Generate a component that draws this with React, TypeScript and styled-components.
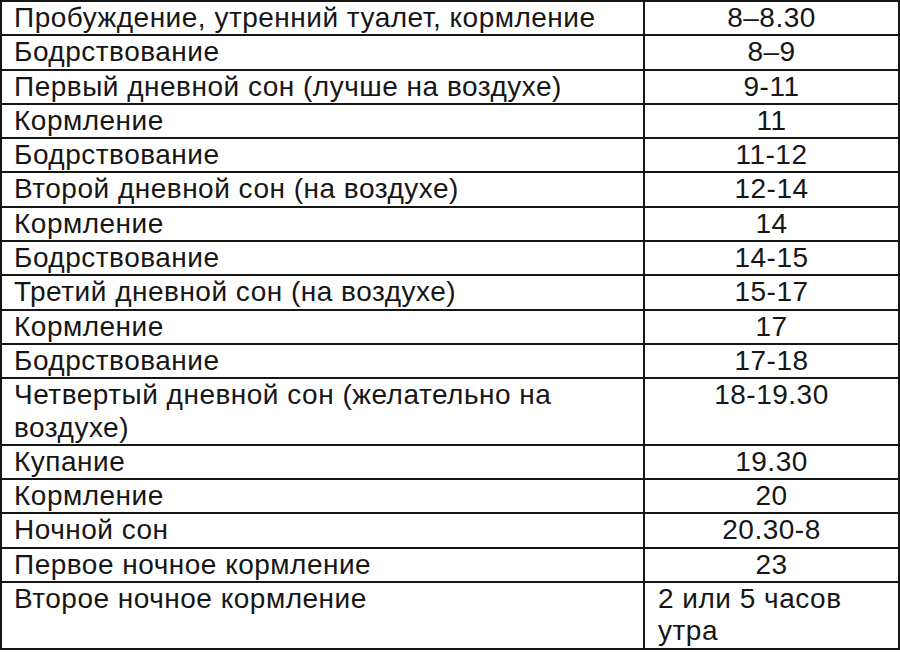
import styled, { createGlobalStyle } from "styled-components";

const GlobalStyle = createGlobalStyle`
  html, body {
    margin: 0;
    padding: 0;
    background: #ffffff;
  }
`;

type Row = { what: string; time: string; left?: boolean };

const rows: Row[] = [
  { what: "Пробуждение, утренний туалет, кормление", time: "8–8.30" },
  { what: "Бодрствование", time: "8–9" },
  { what: "Первый дневной сон (лучше на воздухе)", time: "9-11" },
  { what: "Кормление", time: "11" },
  { what: "Бодрствование", time: "11-12" },
  { what: "Второй дневной сон (на воздухе)", time: "12-14" },
  { what: "Кормление", time: "14" },
  { what: "Бодрствование", time: "14-15" },
  { what: "Третий дневной сон (на воздухе)", time: "15-17" },
  { what: "Кормление", time: "17" },
  { what: "Бодрствование", time: "17-18" },
  { what: "Четвертый дневной сон (желательно на воздухе)", time: "18-19.30" },
  { what: "Купание", time: "19.30" },
  { what: "Кормление", time: "20" },
  { what: "Ночной сон", time: "20.30-8" },
  { what: "Первое ночное кормление", time: "23" },
  { what: "Второе ночное кормление", time: "2 или 5 часов утра", left: true },
];

const App = () => {
  return (
    <>
      <GlobalStyle />
      <Schedule>
        <tbody>
          {rows.map((r, i) => (
            <tr key={i}>
              <ActivityCell>{r.what}</ActivityCell>
              <TimeCell $left={r.left}>{r.time}</TimeCell>
            </tr>
          ))}
        </tbody>
      </Schedule>
    </>
  );
};

export default App;

const Schedule = styled.table`
  width: 900px;
  table-layout: fixed;
  border-collapse: separate;
  border-spacing: 0;
  border-top: 2px solid #161616;
  border-left: 2px solid #161616;
  box-sizing: border-box;
  font-family: "Liberation Sans", Arial, sans-serif;
  font-size: 28px;
  letter-spacing: 0.5px;
  line-height: 32.3px;
  color: #161616;
`;

const ActivityCell = styled.td`
  width: 643px;
  box-sizing: border-box;
  padding: 0 12px;
  vertical-align: top;
  border-right: 2px solid #161616;
  border-bottom: 2px solid #161616;
`;

const TimeCell = styled.td<{ $left?: boolean }>`
  box-sizing: border-box;
  padding: 0 13px;
  vertical-align: top;
  text-align: ${(p) => (p.$left ? "left" : "center")};
  border-right: 2px solid #161616;
  border-bottom: 2px solid #161616;
`;
